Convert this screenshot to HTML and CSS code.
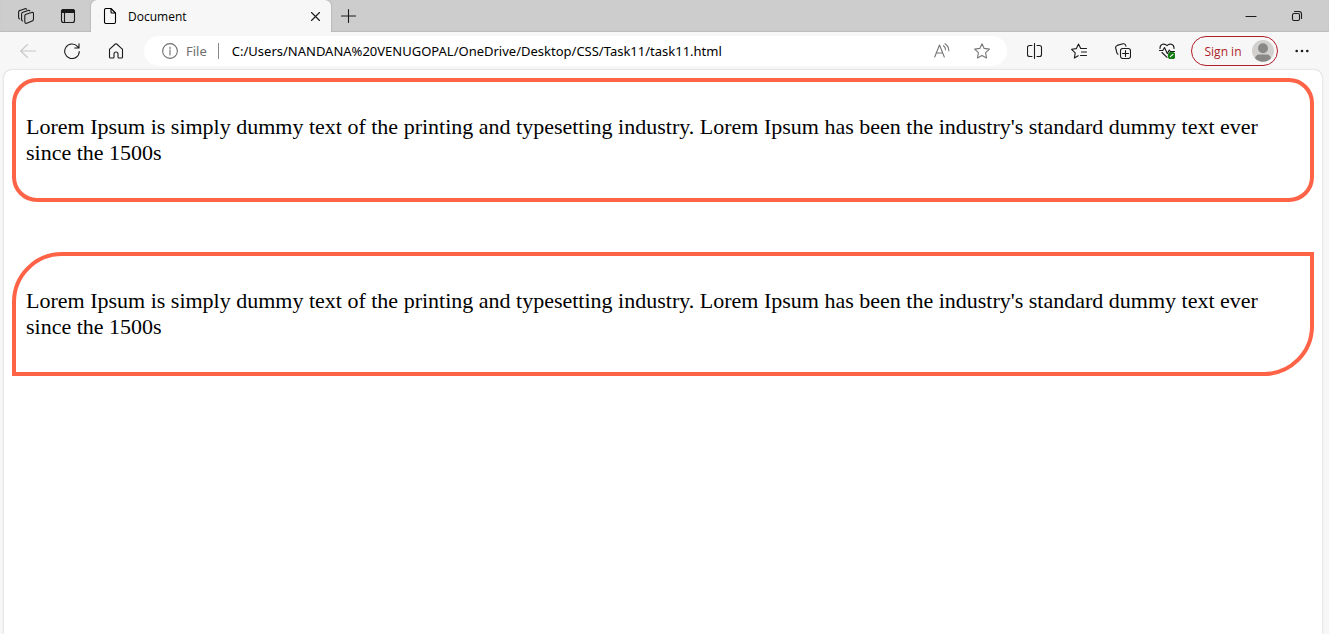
FILE: index.html
```html
<!DOCTYPE html>
<html lang="en">
<head>
<meta charset="UTF-8">
<title>Document</title>
<link rel="stylesheet" href="styles.css">
</head>
<body>
<header>
  <div class="tab-strip">
    <button class="strip-button" aria-label="Workspaces"><svg class="icon" viewBox="0 0 16 16"><path d="M8 6.2L13.7 4.4Q15.5 4 15.5 5.8V11Q15.5 12.5 14.2 13L8.8 15.2Q6.8 15.8 6.8 13.8V7.8Q6.8 6.6 8 6.2z"/><path d="M4.6 13Q3.6 12.6 3.6 11.4V6Q3.6 4.6 4.9 4.2L10.2 2.4Q11.3 2.1 11.8 2.9"/><path d="M1.7 11Q.6 10.6 .6 9.4V4.2Q.6 2.8 1.9 2.4L7 .7Q8.1 .4 8.6 1.2"/></svg></button>
    <button class="strip-button" aria-label="Tab actions"><svg class="icon" viewBox="0 0 16 16"><rect x="1.5" y="1.5" width="13" height="13" rx="2"/><path class="fill" d="M1.5 4.5v-1a2 2 0 0 1 2-2h9a2 2 0 0 1 2 2v1z"/><path d="M4.5 5v9.5"/></svg></button>
    <div class="tab">
      <svg class="icon" viewBox="0 0 16 16"><path d="M2.5 2a1.5 1.5 0 0 1 1.5-1.5h5L13.5 5v9a1.5 1.5 0 0 1-1.5 1.5H4A1.5 1.5 0 0 1 2.5 14z M9 .5V4a1 1 0 0 0 1 1h3.5"/></svg>
      <span class="tab-title">Document</span>
      <button class="tab-close" aria-label="Close tab"><svg class="icon" viewBox="0 0 16 16"><path d="M4.5 4.5l8 8M12.5 4.5l-8 8"/></svg></button>
    </div>
    <button class="new-tab" aria-label="New tab"><svg class="icon" viewBox="0 0 16 16"><path d="M8.5 1.5v13M1.5 8h14"/></svg></button>
    <div class="window-buttons">
      <button class="window-button" aria-label="Minimize"><svg class="icon" viewBox="0 0 16 16"><path d="M3 8.5h10"/></svg></button>
      <button class="window-button" aria-label="Restore"><svg class="icon" viewBox="0 0 16 16"><rect x="3.5" y="5.5" width="7" height="7" rx="1.5"/><path d="M5.5 3.5H10a2.5 2.5 0 0 1 2.5 2.5v4.5"/></svg></button>
    </div>
  </div>
  <div class="toolbar">
    <button class="tool disabled" aria-label="Back" disabled><svg class="icon" viewBox="0 0 16 16"><path d="M16 8H.7M7.5 1.5L.7 8l6.8 6.5"/></svg></button>
    <button class="tool" aria-label="Refresh"><svg class="icon" viewBox="0 0 16 16"><path d="M15.3 8.5A7.3 7.3 0 1 1 13.6 3.6L15 5M15 .8V5h-4.3"/></svg></button>
    <button class="tool" aria-label="Home"><svg class="icon" viewBox="0 0 16 16"><path d="M1.5 6.8Q1.5 6.2 2 5.8L7.3 1Q8 .4 8.7 1L14 5.8Q14.5 6.2 14.5 6.8V14a1 1 0 0 1-1 1H11a1 1 0 0 1-1-1v-3a2 2 0 0 0-4 0v3a1 1 0 0 1-1 1H2.5a1 1 0 0 1-1-1z"/></svg></button>
    <div class="address-bar">
      <button class="site-info"><svg class="icon" viewBox="0 0 16 16"><circle cx="8" cy="8" r="7.4"/><path d="M8 6.8V12M8 4v1.4"/></svg><span>File</span></button>
      <input class="address" type="text" aria-label="Address" value="C:/Users/NANDANA%20VENUGOPAL/OneDrive/Desktop/CSS/Task11/task11.html">
      <button class="address-action" aria-label="Read aloud"><svg class="icon" viewBox="0 0 16 16"><path d="M.7 14L5.5 2l4.8 12M2.3 10h6.4M9.5 2.7q2 1.3 2 4.1M11 .8q3.8 2.3 3.8 7"/></svg></button>
      <button class="address-action" aria-label="Add to favorites"><svg class="icon" viewBox="0 0 16 16"><path d="M8 .8l2.2 4.6 5.2.7-3.8 3.6.9 5.2L8 12.4l-4.5 2.5.9-5.2L.6 6.1l5.2-.7z"/></svg></button>
    </div>
    <button class="tool" aria-label="Split screen"><svg class="icon" viewBox="0 0 16 16"><path d="M5 2.5H2.5a2 2 0 0 0-2 2v7a2 2 0 0 0 2 2H5M10 2.5h2.5a2 2 0 0 1 2 2v7a2 2 0 0 1-2 2H10M7.5 .5v15"/></svg></button>
    <button class="tool" aria-label="Favorites"><svg class="icon" viewBox="0 0 16 16"><path d="M7.2 12.7L3.4 14.9l.8-5L.6 6.3l4.8-.7L7.5 1l2.2 4.5h5.8M10.5 9h5M9.5 12.5h6"/></svg></button>
    <button class="tool" aria-label="Collections"><svg class="icon" viewBox="0 0 16 16"><path d="M3 11.2Q2.2 10.8 1.8 9.5L.7 5Q.3 3 2.2 2.4L8 .8q2-.4 2.6 1.4l.3 1"/><rect x="5.5" y="5.5" width="10" height="10" rx="2.2"/><path d="M10.5 7.5v6M7.5 10.5h6"/></svg></button>
    <button class="tool" aria-label="Browser essentials"><svg class="icon" viewBox="0 0 16 16"><path d="M1 5.5C.8 1 5.4-.2 8 2.7 10.6-.2 15.2 1 15 5.5M3 9.5L8 14.4M0 7.5h3.8l1.7-3 2.8 6 2-3.5 1 1.5H16"/><circle class="health" cx="12.6" cy="12.6" r="3.3"/><path class="tick" d="M11.3 13.7l2.7-2.4"/></svg></button>
    <button class="sign-in"><span>Sign in</span><svg class="avatar" viewBox="0 0 22 22"><circle cx="11" cy="11" r="11" fill="#d2d0ce"/><circle cx="11" cy="8.3" r="5" fill="#8a8886"/><path d="M3 18.2Q4.2 14.5 7 14.5h8q2.8 0 4 3.7A11 11 0 0 1 3 18.2z" fill="#8a8886"/></svg></button>
    <button class="tool menu" aria-label="Settings and more"><svg class="icon" viewBox="0 0 16 16"><g class="dots"><circle cx="2.7" cy="8" r="1.3"/><circle cx="8" cy="8" r="1.3"/><circle cx="13.3" cy="8" r="1.3"/></g></svg></button>
  </div>
</header>
<main>
  <div class="box rounded"><p>Lorem Ipsum is simply dummy text of the printing and typesetting industry. Lorem Ipsum has been the industry's standard dummy text ever since the 1500s</p></div>
  <div class="box leaf"><p>Lorem Ipsum is simply dummy text of the printing and typesetting industry. Lorem Ipsum has been the industry's standard dummy text ever since the 1500s</p></div>
</main>
</body>
</html>
```

FILE: styles.css
```css
* { box-sizing: border-box; }
body {
  margin: 0;
  min-height: 100vh;
  display: flex;
  flex-direction: column;
  background: #f7f7f7;
  color: #000;
}
header { font-family: "Open Sans", "Noto Sans", sans-serif; font-size: 12px; }
button {
  display: flex;
  align-items: center;
  justify-content: center;
  flex: none;
  padding: 0;
  border: 0;
  background: none;
  color: #1b1b1b;
  font: inherit;
}
.icon {
  width: 16px;
  height: 16px;
  flex: none;
  fill: none;
  stroke: currentColor;
  stroke-width: 1.1;
  stroke-linecap: round;
  stroke-linejoin: round;
}
.fill { fill: currentColor; }
.dots { fill: currentColor; stroke: none; }
.health { fill: #107c10; stroke: #107c10; }
.tick { stroke: #fff; }

.tab-strip {
  display: flex;
  height: 32px;
  padding: 0 9px 0 5px;
  background: #cdcdcd;
  box-shadow: inset 0 -1px 1px #bdbdbd;
}
.strip-button { width: 42px; }
.tab {
  display: flex;
  align-items: center;
  width: 240px;
  margin-left: 2px;
  padding: 0 8px 0 11px;
  background: #f7f7f7;
  border-radius: 6px 6px 0 0;
  box-shadow: 0 0 2px #999;
  clip-path: inset(0 -3px 0 -3px);
}
.tab-title { flex: 1; margin-left: 10px; }
.tab-close { width: 16px; height: 16px; }
.new-tab { width: 34px; }
.window-buttons { display: flex; margin-left: auto; }
.window-button { width: 46px; }

.toolbar {
  display: flex;
  align-items: center;
  height: 38px;
  padding: 0 5px 0 6px;
}
.tool { width: 44px; height: 30px; }
.disabled { color: #c8c8c8; }
.address-bar {
  display: flex;
  align-items: center;
  flex: 1;
  min-width: 0;
  height: 30px;
  margin: 0 6px;
  padding: 0 5px 0 18px;
  background: #fff;
  border-radius: 15px;
  font-family: "Noto Sans", "Open Sans", sans-serif;
  font-size: 13px;
}
.site-info {
  gap: 8px;
  padding-right: 11px;
  border-right: 1px solid #8a8a8a;
  color: #6e6e6e;
  height: 16px;
}
.address {
  flex: 1;
  min-width: 0;
  height: 24px;
  padding: 0 0 0 13px;
  border: 0;
  outline: 0;
  background: none;
  color: #000;
  font: inherit;
}
.address-action { width: 40px; height: 30px; color: #767676; }
.sign-in {
  gap: 10px;
  height: 30px;
  width: 87px;
  margin: 0 2px;
  padding: 0 3px 0 12px;
  border: 1px solid #b01e28;
  border-radius: 15px;
  color: #b01e28;
}
.avatar { width: 22px; height: 22px; }

main {
  flex: 1;
  margin: 0 7px 0 4px;
  padding: 8px;
  background: #fff;
  border-radius: 8px 8px 0 0;
  box-shadow: 0 0 2px #bbb;
  font-family: "Liberation Serif", "Times New Roman", serif;
  font-size: 22px;
  line-height: 26px;
}
.box {
  padding: 10px;
  border: 4px solid tomato;
}
.box p { margin: 22px 0; }
.rounded { border-radius: 25px; }
.leaf { margin-top: 50px; border-radius: 50px 0; }
```
